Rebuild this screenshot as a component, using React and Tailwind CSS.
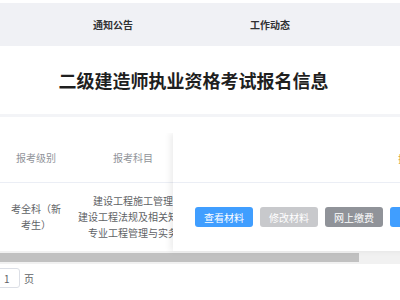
import React from "react";

export default function App() {
  const font = { fontFamily: '"Noto Sans CJK SC", "Noto Sans", sans-serif' };
  return (
    <div className="w-[400px] h-[300px] overflow-hidden bg-white" style={font}>
      <div className="h-[3px]" />
      <div className="h-[43px] bg-[#f0f1f5] flex items-center text-[10px] font-bold text-[#303133]">
        <div className="w-[226px] text-center">通知公告</div>
        <div className="w-[88px] text-center">工作动态</div>
      </div>
      <div className="h-[68px] flex items-center justify-center pr-[13px]">
        <h1 className="text-[18px] font-bold text-[#1f1f1f]">二级建造师执业资格考试报名信息</h1>
      </div>
      <div className="h-[3px] bg-[#f3f4f7]" />
      <div className="h-[16px]" />
      <div className="relative h-[131px] overflow-hidden">
        <div className="flex flex-col w-[560px]">
          <div className="h-[50px] flex items-center text-[10px] text-[#909399] border-b border-[#ebeef5]">
            <div className="w-[72px] text-center">报考级别</div>
            <div className="w-[122px] text-center">报考科目</div>
          </div>
          <div className="h-[68px] flex items-center text-[10px] text-[#606266] leading-[16px]">
            <div className="w-[72px] px-[10px] text-center">考全科（新考生）</div>
            <div className="w-[122px] flex flex-col items-center whitespace-nowrap">
              <span>建设工程施工管理</span>
              <span>建设工程法规及相关知识</span>
              <span>专业工程管理与实务</span>
            </div>
          </div>
          <div className="h-[13px] bg-[#f1f1f1] flex items-center">
            <div className="h-[9px] w-[359px] bg-[#c1c1c1]" />
          </div>
        </div>
        <div className="absolute left-[173px] top-0 w-[300px] h-[118px] bg-white shadow-[-3px_0_6px_rgba(0,0,0,0.07)] flex flex-col">
          <div className="h-[50px] border-b border-[#ebeef5] relative">
            <span className="absolute left-[225px] top-[18px] text-[10px] text-[#d9a446]">操作</span>
          </div>
          <div className="h-[68px] flex items-center pl-[22px] gap-[7px] text-[10px] text-white">
            <div className="w-[58px] shrink-0 h-[20px] rounded-[3px] bg-[#409eff] flex items-center justify-center">查看材料</div>
            <div className="w-[58px] shrink-0 h-[20px] rounded-[3px] bg-[#c8c9cc] flex items-center justify-center">修改材料</div>
            <div className="w-[58px] shrink-0 h-[20px] rounded-[3px] bg-[#909399] flex items-center justify-center">网上缴费</div>
            <div className="w-[58px] shrink-0 h-[20px] rounded-[3px] bg-[#409eff] flex items-center justify-center">打印</div>
          </div>
        </div>
      </div>
      <div className="h-[4px]" />
      <div className="flex items-center h-[20px] text-[10px] text-[#606266]">
        <div className="w-[21px] h-[20px] -ml-[1px] border border-[#dcdfe6] rounded-r-[3px] flex items-center pl-[4px]">1</div>
        <span className="ml-[4px]">页</span>
      </div>
    </div>
  );
}
